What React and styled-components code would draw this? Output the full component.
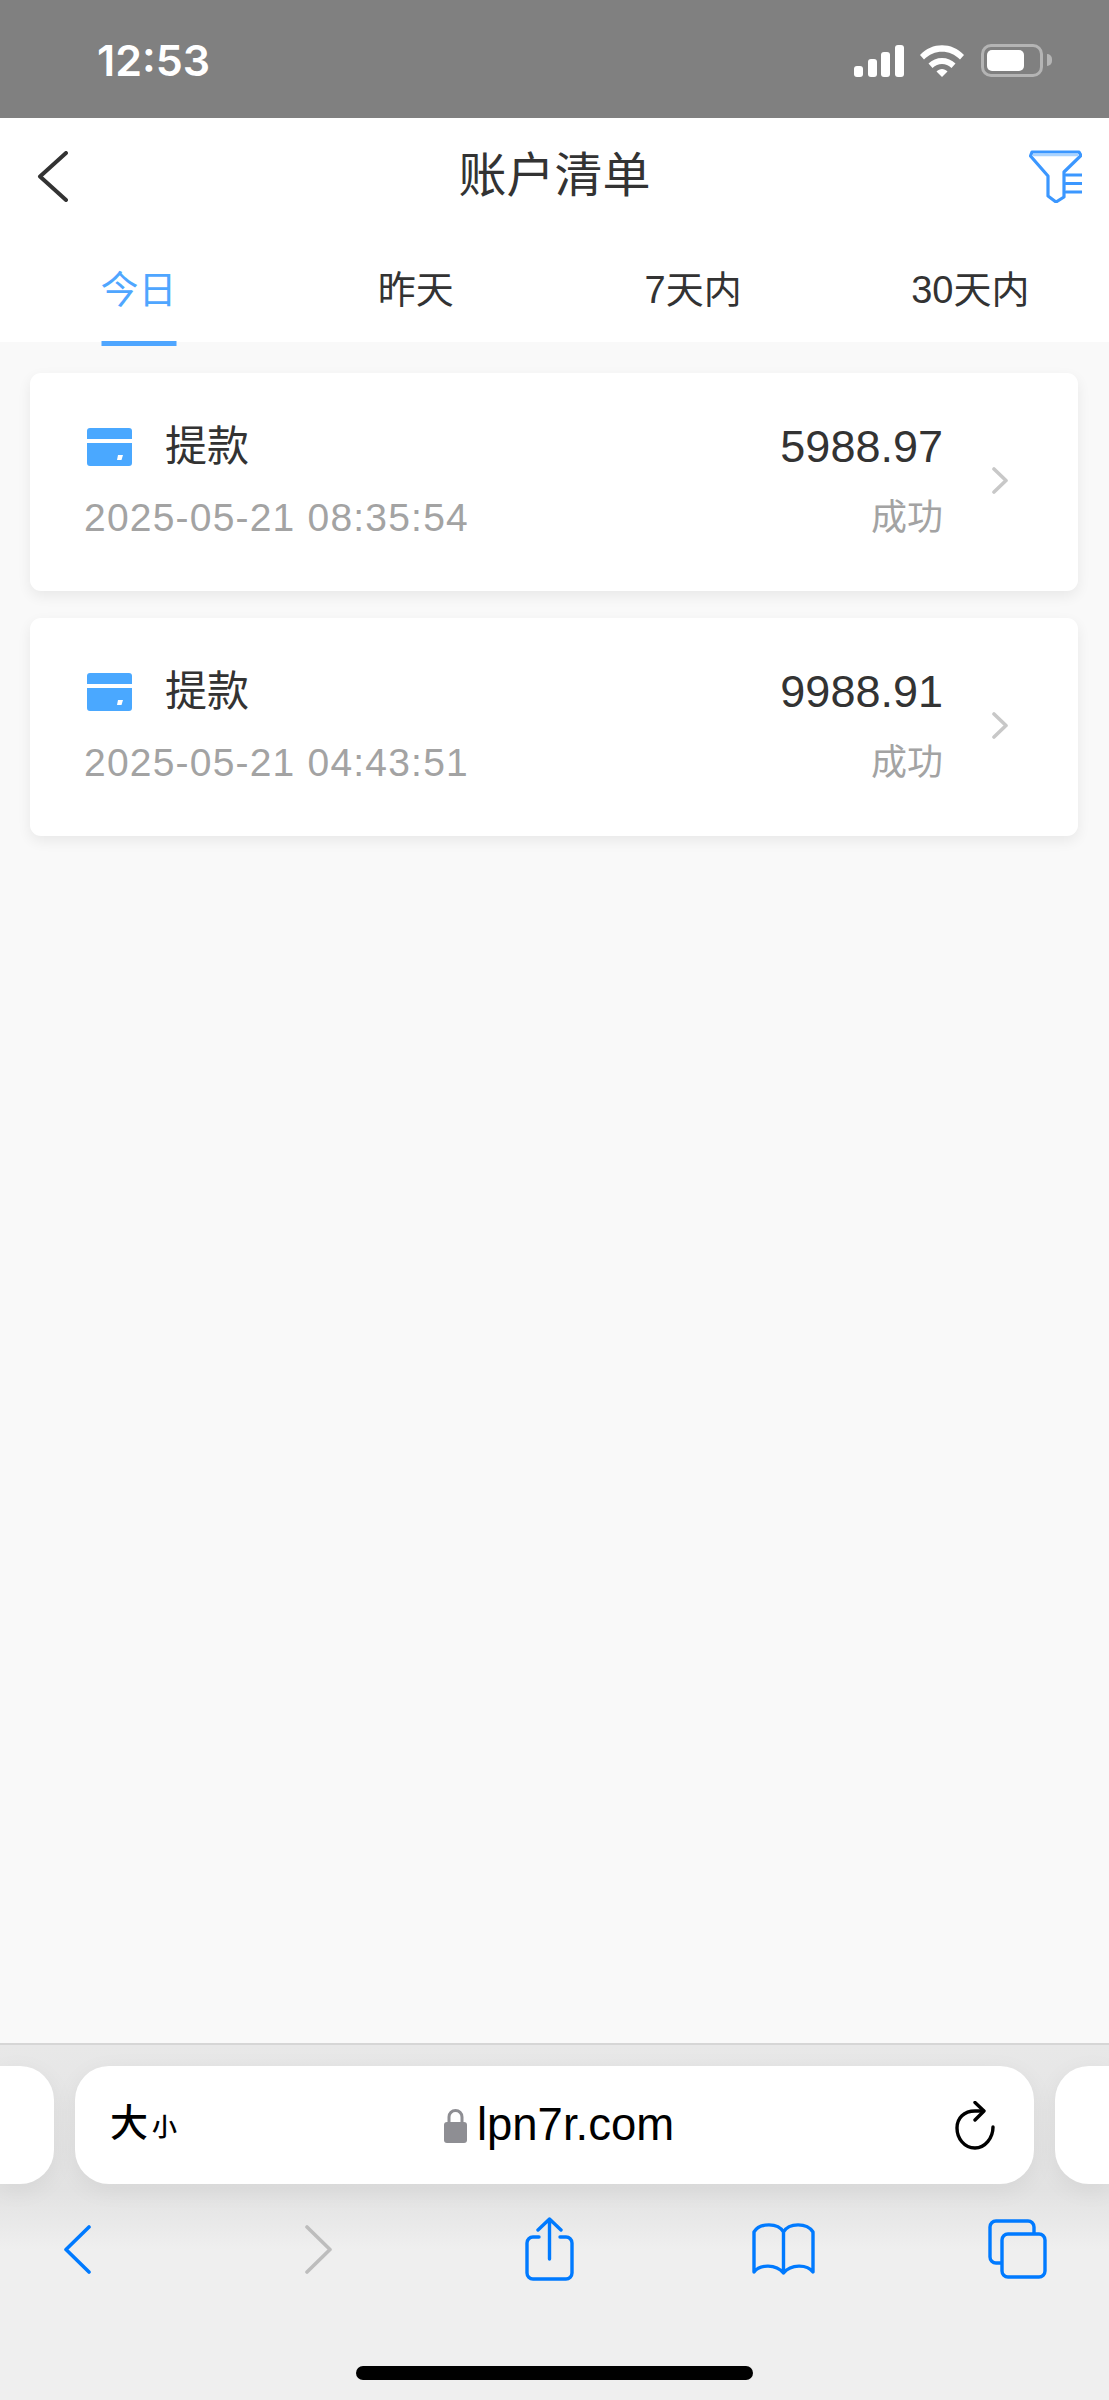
import React from 'react';
import styled, { createGlobalStyle } from 'styled-components';

const records = [
  { amount: '5988.97', time: '2025-05-21 08:35:54' },
  { amount: '9988.91', time: '2025-05-21 04:43:51' },
];

const tabs = ['今日', '昨天', '7天内', '30天内'];

const App = () => {
  return (
    <>
      <GlobalStyle />
      <Page>
        <StatusBar>
          <Clock>12:53</Clock>
          <StatusIcons>
            <svg width="50" height="32" viewBox="0 0 50 32" fill="#fff">
              <rect x="0" y="21" width="9" height="11" rx="3" />
              <rect x="14" y="14" width="9" height="18" rx="3" />
              <rect x="27" y="7" width="9" height="25" rx="3" />
              <rect x="41" y="0" width="9" height="32" rx="3" />
            </svg>
            <svg width="44" height="32" viewBox="0 0 44 32" fill="#fff">
              <path d="M0 10C12-3 32-3 44 10L40 14.5C30 4 14 4 4 14.5Z" />
              <path d="M8.5 18.5C15.5 11 28.5 11 35.5 18.5L31.5 23C26 17.5 18 17.5 12.5 23Z" />
              <path d="M16.5 26.5C19.5 23 24.5 23 27.5 26.5L22 32Z" />
            </svg>
            <Battery>
              <BatteryFill />
            </Battery>
          </StatusIcons>
        </StatusBar>

        <Header>
          <BackButton>
            <svg width="31" height="51" viewBox="0 0 31 51" fill="none" stroke="#333" strokeWidth="4" strokeLinecap="round" strokeLinejoin="round">
              <path d="M29 2L3 25.5L29 49" />
            </svg>
          </BackButton>
          <Title>账户清单</Title>
          <FilterButton>
            <svg width="53" height="53" viewBox="0 0 53 53" fill="none" stroke="#3b97ff" strokeWidth="3.2" strokeLinejoin="round" strokeLinecap="round">
              <path d="M3 2H50L52 5.5L35 22V47L27 52L19 46V26L1.5 6Z" />
              <path d="M5 5H48" strokeWidth="2.5" stroke="#a9d3ff" />
              <path d="M37 25H53M37 33.5H53M37 42H53" />
            </svg>
          </FilterButton>
        </Header>

        <TabBar>
          {tabs.map((tab, i) => (
            <Tab key={tab} $active={i === 0}>{tab}</Tab>
          ))}
        </TabBar>

        <List>
          {records.map((item) => (
            <Card key={item.time}>
              <CardBody>
                <Row>
                  <Kind>
                    <svg width="45" height="38" viewBox="0 0 45 38">
                      <path fill="#4aa8ff" d="M3 0H42A3 3 0 0 1 45 3V11H0V3A3 3 0 0 1 3 0Z" />
                      <path fill="#4aa8ff" fillRule="evenodd" d="M0 15H45V35A3 3 0 0 1 42 38H3A3 3 0 0 1 0 35ZM31 27L30 32H34.5L36 27Z" />
                    </svg>
                    <KindName>提款</KindName>
                  </Kind>
                  <Amount>{item.amount}</Amount>
                </Row>
                <Row>
                  <Time>{item.time}</Time>
                  <State>成功</State>
                </Row>
              </CardBody>
              <Chevron>
                <svg width="16" height="27" viewBox="0 0 16 27" fill="none" stroke="#c8c8c8" strokeWidth="3.6" strokeLinecap="round" strokeLinejoin="round">
                  <path d="M2 2L14 13.5L2 25" />
                </svg>
              </Chevron>
            </Card>
          ))}
        </List>

        <BrowserBar>
          <PillRow>
            <SidePill $side="left" />
            <AddressPill>
              <TextSize>
                大<small>小</small>
              </TextSize>
              <Domain>
                <svg width="23" height="35" viewBox="0 0 23 35">
                  <path d="M5 15V9A6.500 6.500 0 0 1 18 9V15" fill="none" stroke="#8e8e93" strokeWidth="3" />
                  <rect x="0" y="14" width="23" height="21" rx="3" fill="#8e8e93" />
                </svg>
                <DomainText>lpn7r.com</DomainText>
              </Domain>
              <svg width="40" height="49" viewBox="0 0 40 49" fill="none" stroke="#000" strokeWidth="3.4" strokeLinecap="round" strokeLinejoin="round">
                <path d="M38 26C38 37 30 47 20 47C9 47 2 37 2 27C2 17 9 10 20 10H28" />
                <path d="M20 1.500L29 10L20 19" />
              </svg>
            </AddressPill>
            <SidePill $side="right" />
          </PillRow>

          <Toolbar>
            <ToolIcon $gap={64}>
              <svg width="27" height="49" viewBox="0 0 27 49" fill="none" stroke="#007aff" strokeWidth="3.6" strokeLinecap="round" strokeLinejoin="round">
                <path d="M25 2L2 24.500L25 47" />
              </svg>
            </ToolIcon>
            <ToolIcon $gap={214}>
              <svg width="27" height="49" viewBox="0 0 27 49" fill="none" stroke="#bdbdbd" strokeWidth="3.6" strokeLinecap="round" strokeLinejoin="round">
                <path d="M2 2L25 24.500L2 47" />
              </svg>
            </ToolIcon>
            <ToolIcon $gap={193}>
              <svg width="49" height="64" viewBox="0 0 49 64" fill="none" stroke="#007aff" strokeWidth="3.4" strokeLinecap="round" strokeLinejoin="round">
                <path d="M14 20H8A6 6 0 0 0 2 26V56A6 6 0 0 0 8 62H41A6 6 0 0 0 47 56V26A6 6 0 0 0 41 20H35" />
                <path d="M24.500 42V2M13 13L24.500 2L36 13" />
              </svg>
            </ToolIcon>
            <ToolIcon $gap={178}>
              <svg width="63" height="52" viewBox="0 0 63 52" fill="none" stroke="#007aff" strokeWidth="3.4" strokeLinecap="round" strokeLinejoin="round">
                <path d="M31.500 9C26 -0.500 8 -0.500 2 9V49C8 41 24 41 31.500 50C39 41 55 41 61 49V9C55 -0.500 37 -0.500 31.500 9V50" />
              </svg>
            </ToolIcon>
            <ToolIcon $gap={173}>
              <svg width="59" height="60" viewBox="0 0 59 60" fill="none" stroke="#007aff" strokeWidth="3.4" strokeLinejoin="round">
                <path d="M14 44H8A6 6 0 0 1 2 38V8A6 6 0 0 1 8 2H40A6 6 0 0 1 46 8V15" />
                <rect x="14" y="15" width="43" height="43" rx="6" />
              </svg>
            </ToolIcon>
          </Toolbar>

          <HomeRow>
            <HomeIndicator />
          </HomeRow>
        </BrowserBar>
      </Page>
    </>
  );
};

export default App;

const GlobalStyle = createGlobalStyle`
  html, body {
    margin: 0;
    padding: 0;
    background: #f9f9f9;
    font-family: 'Liberation Sans', 'Noto Sans CJK SC', sans-serif;
  }
  svg {
    display: block;
  }
`;

const Page = styled.div`
  width: 1109px;
  height: 2400px;
  display: flex;
  flex-direction: column;
  overflow: hidden;
`;

const StatusBar = styled.div`
  height: 118px;
  flex: none;
  box-sizing: border-box;
  padding: 44px 66px 0 97px;
  background: #808080;
  display: flex;
  justify-content: space-between;
  align-items: flex-start;
`;

const Clock = styled.div`
  font-family: Inter, 'Liberation Sans', sans-serif;
  font-size: 43px;
  line-height: 33px;
  font-weight: 600;
  color: #fff;
`;

const StatusIcons = styled.div`
  display: flex;
  align-items: center;
  gap: 16px;
`;

const Battery = styled.div`
  position: relative;
  width: 62px;
  height: 33px;
  box-sizing: border-box;
  border: 3px solid #b4b4b4;
  border-radius: 10px;
  padding: 3px;
  margin-left: 1px;
  &::after {
    content: '';
    position: absolute;
    right: -12px;
    top: 7px;
    width: 5px;
    height: 12px;
    border-radius: 0 6px 6px 0;
    background: #b4b4b4;
  }
`;

const BatteryFill = styled.div`
  width: 37px;
  height: 100%;
  border-radius: 5px;
  background: #fff;
`;

const Header = styled.div`
  height: 116px;
  flex: none;
  box-sizing: border-box;
  padding: 0 27px;
  background: #fff;
  display: grid;
  grid-template-columns: 1fr auto 1fr;
  align-items: center;
`;

const BackButton = styled.div`
  justify-self: start;
  margin-left: 10px;
`;

const FilterButton = styled.div`
  justify-self: end;
`;

const Title = styled.div`
  font-size: 48px;
  line-height: 60px;
  color: #333;
`;

const TabBar = styled.div`
  height: 108px;
  flex: none;
  background: #fff;
  display: grid;
  grid-template-columns: repeat(4, 1fr);
  box-sizing: border-box;
`;

const Tab = styled.div`
  position: relative;
  font-size: 38px;
  line-height: 112px;
  text-align: center;
  color: ${(props) => (props.$active ? '#4fa6ff' : '#333')};
  &::after {
    content: '';
    display: ${(props) => (props.$active ? 'block' : 'none')};
    position: absolute;
    left: 50%;
    bottom: 0;
    width: 75px;
    height: 5px;
    transform: translateX(-50%);
    background: #4fa6ff;
  }
`;

const List = styled.div`
  flex: 1;
  background: #f9f9f9;
  padding: 31px 31px 0 30px;
  display: flex;
  flex-direction: column;
  gap: 27px;
`;

const Card = styled.div`
  height: 218px;
  box-sizing: border-box;
  padding: 0 70px 0 54px;
  background: #fff;
  border-radius: 11px;
  box-shadow: 0 5px 14px rgba(0, 0, 0, 0.07);
  display: flex;
  align-items: center;
`;

const CardBody = styled.div`
  flex: 1;
  display: flex;
  flex-direction: column;
  gap: 21px;
`;

const Row = styled.div`
  height: 50px;
  display: flex;
  justify-content: space-between;
  align-items: center;
`;

const Kind = styled.div`
  display: flex;
  align-items: center;
  padding-left: 3px;
  gap: 33px;
`;

const KindName = styled.div`
  font-size: 42px;
  line-height: 50px;
  color: #333;
`;

const Amount = styled.div`
  font-size: 45px;
  line-height: 50px;
  color: #333;
`;

const Time = styled.div`
  font-size: 39px;
  line-height: 50px;
  letter-spacing: 1.2px;
  color: #a3a3a3;
`;

const State = styled.div`
  font-size: 36px;
  line-height: 50px;
  color: #a3a3a3;
`;

const Chevron = styled.div`
  margin: -3px 0 0 49px;
`;

const BrowserBar = styled.div`
  height: 357px;
  flex: none;
  box-sizing: border-box;
  border-top: 2px solid #d6d6d6;
  padding-top: 21px;
  background: linear-gradient(#e8e8e8 0, #e2e2e2 145px, #efefef 205px);
  display: flex;
  flex-direction: column;
`;

const PillRow = styled.div`
  height: 118px;
  display: flex;
  justify-content: space-between;
`;

const SidePill = styled.div`
  width: 54px;
  background: #fff;
  border-radius: ${(props) => (props.$side === 'left' ? '0 34px 34px 0' : '34px 0 0 34px')};
  box-shadow: 0 6px 24px rgba(0, 0, 0, 0.06);
`;

const AddressPill = styled.div`
  width: 959px;
  box-sizing: border-box;
  padding: 0 39px 0 35px;
  background: #fff;
  border-radius: 34px;
  box-shadow: 0 6px 24px rgba(0, 0, 0, 0.06);
  display: flex;
  justify-content: space-between;
  align-items: center;
`;

const TextSize = styled.div`
  font-size: 38px;
  line-height: 50px;
  font-weight: 500;
  color: #000;
  small {
    font-size: 25px;
    margin-left: 4px;
  }
`;

const Domain = styled.div`
  display: flex;
  align-items: center;
  gap: 10px;
  margin-right: 14px;
`;

const DomainText = styled.div`
  font-size: 45.5px;
  line-height: 50px;
  color: #000;
`;

const Toolbar = styled.div`
  height: 64px;
  margin-top: 33px;
  display: flex;
  align-items: center;
`;

const ToolIcon = styled.div`
  margin-left: ${(props) => props.$gap}px;
  flex: none;
`;

const HomeRow = styled.div`
  margin-top: 85px;
  display: flex;
  justify-content: center;
`;

const HomeIndicator = styled.div`
  width: 397px;
  height: 14px;
  border-radius: 7px;
  background: #000;
`;
